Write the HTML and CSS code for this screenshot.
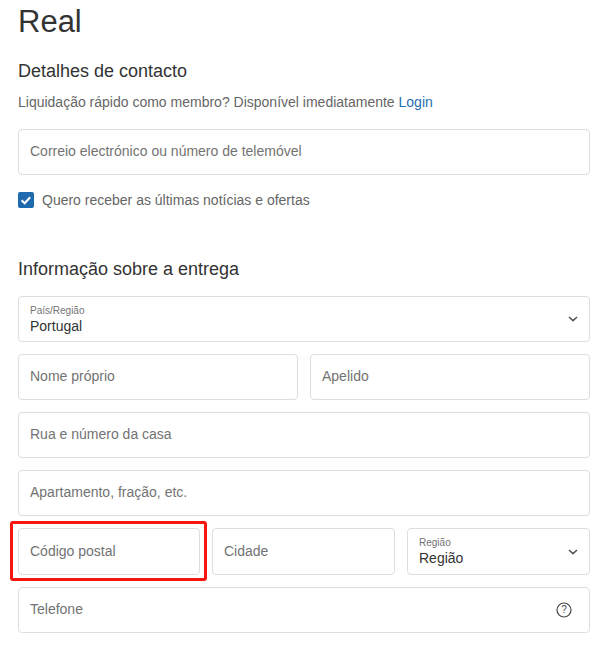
FILE: index.html
```html
<!DOCTYPE html>
<html lang="pt">
<head>
<meta charset="utf-8">
<title>Real</title>
<link rel="stylesheet" href="styles.css">
</head>
<body>
<main class="page">
  <h1 class="title">Real</h1>
  <h2 class="section-title">Detalhes de contacto</h2>
  <p class="login-line">Liquidação rápido como membro? Disponível imediatamente <a class="link" href="#">Login</a></p>
  <div class="field"><span class="placeholder">Correio electrónico ou número de telemóvel</span></div>
  <label class="check-row">
    <span class="checkbox">
      <svg width="16" height="16" viewBox="0 0 16 16"><path d="M3.6 8.3l3 2.9 5.6-6" fill="none" stroke="#fff" stroke-width="2"/></svg>
    </span>
    <span class="check-label">Quero receber as últimas notícias e ofertas</span>
  </label>
  <h2 class="section-title delivery">Informação sobre a entrega</h2>
  <div class="form">
    <div class="field select">
      <div class="select-value"><span class="mini">País/Região</span><span class="value">Portugal</span></div>
      <svg class="chevron" width="10" height="6" viewBox="0 0 10 6"><path d="M1 1l4 3.6L9 1" fill="none" stroke="#555" stroke-width="1.6"/></svg>
    </div>
    <div class="row two">
      <div class="field"><span class="placeholder">Nome próprio</span></div>
      <div class="field"><span class="placeholder">Apelido</span></div>
    </div>
    <div class="field"><span class="placeholder">Rua e número da casa</span></div>
    <div class="field"><span class="placeholder">Apartamento, fração, etc.</span></div>
    <div class="row three">
      <div class="highlighted">
        <div class="field tall"><span class="placeholder">Código postal</span></div>
        <div class="red-box"></div>
      </div>
      <div class="field tall"><span class="placeholder">Cidade</span></div>
      <div class="field select tall">
        <div class="select-value"><span class="mini">Região</span><span class="value">Região</span></div>
        <svg class="chevron" width="10" height="6" viewBox="0 0 10 6"><path d="M1 1l4 3.6L9 1" fill="none" stroke="#555" stroke-width="1.6"/></svg>
      </div>
    </div>
    <div class="field select">
      <span class="placeholder">Telefone</span>
      <svg class="help" width="16" height="16" viewBox="0 0 16 16"><circle cx="8" cy="8" r="7" fill="none" stroke="#444" stroke-width="1.2"/><text x="8" y="11.4" text-anchor="middle" class="help-mark">?</text></svg>
    </div>
  </div>
</main>
</body>
</html>
```
FILE: styles.css
```css
* { box-sizing: border-box; }
html, body { margin: 0; padding: 0; background: #fff; }
body { font-family: "Liberation Sans", Arial, sans-serif; color: #333; }
.page { padding: 0 18px; width: 608px; }
.title { margin: 0; padding-top: 4px; font-size: 31px; line-height: 36px; font-weight: 400; color: #333; }
.section-title { margin: 20px 0 0; font-size: 18px; line-height: 22px; font-weight: 400; color: #333; }
.login-line { margin: 10px 0 0; font-size: 14px; line-height: 20px; color: #666; }
.link { color: #1f6fb2; text-decoration: none; }
.field { display: flex; align-items: center; height: 46px; padding: 0 11px; background: #fff; border: 1px solid #dedede; border-radius: 4px; }
.login-line + .field { margin-top: 17px; }
.placeholder { font-size: 14px; line-height: 20px; color: #737373; margin-bottom: 2px; }
.check-row { display: flex; align-items: center; gap: 8px; margin-top: 16px; height: 18px; }
.checkbox { display: flex; width: 16px; height: 16px; background: #1f69ae; border-radius: 2px; }
.check-label { font-size: 14px; line-height: 18px; color: #666; }
.delivery { margin-top: 49px; }
.form { display: flex; flex-direction: column; gap: 12px; margin-top: 16px; }
.row { display: grid; gap: 12px; }
.two { grid-template-columns: 1fr 1fr; }
.three { grid-template-columns: 182px 183px 183px; }
.select { justify-content: space-between; }
.select-value { display: flex; flex-direction: column; padding-top: 2px; }
.tall .select-value { padding-top: 1px; }
.mini { font-size: 10px; line-height: 12px; color: #737373; }
.value { font-size: 14px; line-height: 17px; color: #333; margin-top: 1px; }
.help { margin-right: 6px; }
.help-mark { font-family: "Liberation Sans", Arial, sans-serif; font-size: 10px; font-weight: 400; fill: #444; }
.tall { height: 47px; }
.highlighted { position: relative; }
.red-box { position: absolute; left: -8px; top: -7px; width: 197px; height: 60px; border: 3px solid #f5170f; border-radius: 3px; }
```
